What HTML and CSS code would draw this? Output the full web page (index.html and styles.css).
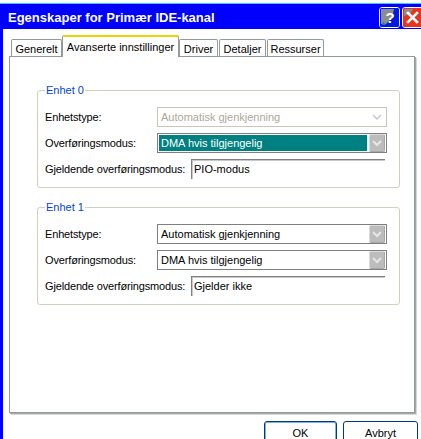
FILE: index.html
```html
<!DOCTYPE html>
<html lang="no">
<head>
    <meta charset="UTF-8">
    <title>Egenskaper for Primær IDE-kanal</title>
    <link rel="stylesheet" href="styles.css">
</head>
<body>

<div class="window">
    <div class="titlebar">
        <span class="title">Egenskaper for Primær IDE-kanal</span>
        <div class="caption-buttons">
            <span class="cap-btn help">
                <svg width="19" height="19" viewBox="0 0 19 19">
                    <rect width="19" height="19" fill="#0018e8"/>
                    <path d="M1 1h13l-2 9-6 6H1z" fill="#8c8c8c"/>
                    <path d="M3 14l3 3h-4z" fill="#0a8a8a"/>
                    <text x="10" y="15" text-anchor="middle" font-family="Liberation Sans, sans-serif" font-weight="bold" font-size="15" fill="#fff">?</text>
                </svg>
            </span>
            <span class="cap-btn close">
                <svg width="19" height="19" viewBox="0 0 19 19">
                    <rect width="19" height="19" fill="#e8341c"/>
                    <path d="M1 1h9l-3 5-6 2z" fill="#8c8c8c"/>
                    <path d="M5 5l9 9M14 5l-9 9" stroke="#fff" stroke-width="2.6" stroke-linecap="square"/>
                </svg>
            </span>
        </div>
    </div>

    <div class="client">
        <div class="tabs">
            <span class="tab tab-general">Generelt</span>
            <span class="tab active tab-advanced">Avanserte innstillinger</span>
            <span class="tab tab-driver">Driver</span>
            <span class="tab tab-details">Detaljer</span>
            <span class="tab tab-resources">Ressurser</span>
        </div>

        <div class="panel">
            <fieldset class="group">
                <legend>Enhet 0</legend>
                <div class="row">
                    <span class="label">Enhetstype:</span>
                    <div class="combo disabled">
                        <span class="combo-text">Automatisk gjenkjenning</span>
                        <span class="combo-arrow">
                            <svg width="16" height="18" viewBox="0 0 16 18"><path d="M4 7l4 4 4-4" fill="none" stroke="#c8c8c8" stroke-width="1.5"/></svg>
                        </span>
                    </div>
                </div>
                <div class="row">
                    <span class="label">Overføringsmodus:</span>
                    <div class="combo">
                        <span class="combo-text selected">DMA hvis tilgjengelig</span>
                        <span class="combo-arrow">
                            <svg width="16" height="18" viewBox="0 0 16 18"><path d="M4 7l4 4 4-4" fill="none" stroke="#e6e6e6" stroke-width="2"/></svg>
                        </span>
                    </div>
                </div>
                <div class="row">
                    <span class="label">Gjeldende overføringsmodus:</span>
                    <div class="edit">PIO-modus</div>
                </div>
            </fieldset>

            <fieldset class="group">
                <legend>Enhet 1</legend>
                <div class="row">
                    <span class="label">Enhetstype:</span>
                    <div class="combo">
                        <span class="combo-text">Automatisk gjenkjenning</span>
                        <span class="combo-arrow">
                            <svg width="16" height="18" viewBox="0 0 16 18"><path d="M4 7l4 4 4-4" fill="none" stroke="#e6e6e6" stroke-width="2"/></svg>
                        </span>
                    </div>
                </div>
                <div class="row">
                    <span class="label">Overføringsmodus:</span>
                    <div class="combo">
                        <span class="combo-text">DMA hvis tilgjengelig</span>
                        <span class="combo-arrow">
                            <svg width="16" height="18" viewBox="0 0 16 18"><path d="M4 7l4 4 4-4" fill="none" stroke="#e6e6e6" stroke-width="2"/></svg>
                        </span>
                    </div>
                </div>
                <div class="row">
                    <span class="label">Gjeldende overføringsmodus:</span>
                    <div class="edit">Gjelder ikke</div>
                </div>
            </fieldset>
        </div>

        <div class="actions">
            <button class="btn default">OK</button>
            <button class="btn">Avbryt</button>
        </div>
    </div>
</div>

</body>
</html>
```

FILE: styles.css
```css
body {
    margin: 0;
    width: 421px;
    height: 439px;
    overflow: hidden;
    background-color: #fff;
    font-family: 'Liberation Sans', Arial, sans-serif;
    font-size: 11px;
    color: #000;
}

.window {
    padding-top: 3px;
}

.titlebar {
    display: flex;
    align-items: center;
    height: 26px;
    padding: 2px 0 0 8px;
    box-sizing: border-box;
    border-top: 1px solid #3cc8ff;
    background-color: #0000fe;
}

.title {
    color: #fff;
    font-weight: bold;
    font-size: 13px;
}

.caption-buttons {
    display: flex;
    gap: 2px;
    margin-left: auto;
    margin-right: -2px;
}

.cap-btn {
    display: block;
    width: 21px;
    height: 21px;
    box-sizing: border-box;
    border: 1px solid #fff;
    border-radius: 3px;
    overflow: hidden;
}

.cap-btn svg {
    display: block;
}

.client {
    height: 420px;
    padding: 7px 0 0 6px;
    border-left: 3px solid #0000fe;
}

/* вкладки */
.tabs {
    display: flex;
    align-items: flex-end;
    height: 21px;
    padding-left: 2px;
    margin-bottom: -1px;
    position: relative;
    z-index: 1;
}

.tab {
    display: flex;
    align-items: center;
    justify-content: center;
    height: 17px;
    box-sizing: border-box;
    margin-bottom: 1px;
    padding-top: 1px;
    border: 1px solid #919b9c;
    border-bottom: none;
    border-radius: 2px 2px 0 0;
    background-color: #fff;
}

.tab.active {
    height: 22px;
    margin-bottom: 0;
    padding-bottom: 2px;
    border-top: 2px solid #e8d400;
}

.tab-general { width: 51px; }
.tab-advanced { width: 117px; }
.tab-driver { width: 39px; }
.tab-details { width: 47px; margin-left: 1px; }
.tab-resources { width: 57px; margin-left: 1px; }

.panel {
    width: 406px;
    height: 357px;
    padding-top: 27px;
    box-sizing: border-box;
    border: 1px solid #919b9c;
    box-shadow: 1px 1px 0 #a8a8a8, 2px 2px 0 #d8d8d8;
    display: flex;
    flex-direction: column;
    gap: 13px;
}

.panel .group {
    width: 363px;
    box-sizing: border-box;
    margin: 0 0 0 27px;
    padding: 11px 12px 8px 7px;
    border: 1px solid #d0d0bf;
    border-radius: 3px;
    display: flex;
    flex-direction: column;
    gap: 6px;
}

.group legend {
    padding: 0 1px;
    color: #0046d5;
}

.row {
    display: flex;
    align-items: center;
    height: 20px;
}

.label {
    letter-spacing: -0.15px;
}

.combo,
.edit {
    margin-left: auto;
}

.combo {
    display: flex;
    align-items: center;
    width: 230px;
    height: 20px;
    box-sizing: border-box;
    border: 1px solid #7f7f7f;
    padding: 0 1px;
}

.combo-text {
    flex: 1;
    height: 16px;
    line-height: 16px;
    padding-left: 2px;
}

.combo-text.selected {
    background-color: #008080;
    color: #fff;
}

.combo-arrow {
    width: 16px;
    height: 18px;
    margin-left: 2px;
    box-sizing: border-box;
    border-radius: 2px;
    background-color: #bcbcbc;
    border: 1px solid #a8a8a8;
    border-top-color: #dcdcdc;
    border-left-color: #dcdcdc;
}

.combo-arrow svg {
    display: block;
    margin: -1px 0 0 -1px;
}

.combo.disabled {
    border-color: #c9c7ba;
    color: #aca899;
}

.combo.disabled .combo-arrow {
    background: none;
    border-color: transparent;
}

.edit {
    width: 194px;
    height: 20px;
    margin-right: 2px;
    box-sizing: border-box;
    padding-left: 2px;
    line-height: 18px;
    border-top: 1px solid #808080;
    border-left: 1px solid #808080;
    box-shadow: inset 1px 1px 0 #c8c8c8;
}

.actions {
    display: flex;
    justify-content: flex-end;
    gap: 6px;
    width: 409px;
    margin-top: 8px;
}

.btn {
    height: 23px;
    width: 75px;
    box-sizing: border-box;
    border: 1px solid #003c74;
    border-radius: 3px;
    background-color: #fff;
    font-family: inherit;
    font-size: 11px;
    color: #000;
    padding: 0;
}

.btn.default {
    width: 73px;
    box-shadow: inset 0 0 0 1px #7fb4d8;
}
```
